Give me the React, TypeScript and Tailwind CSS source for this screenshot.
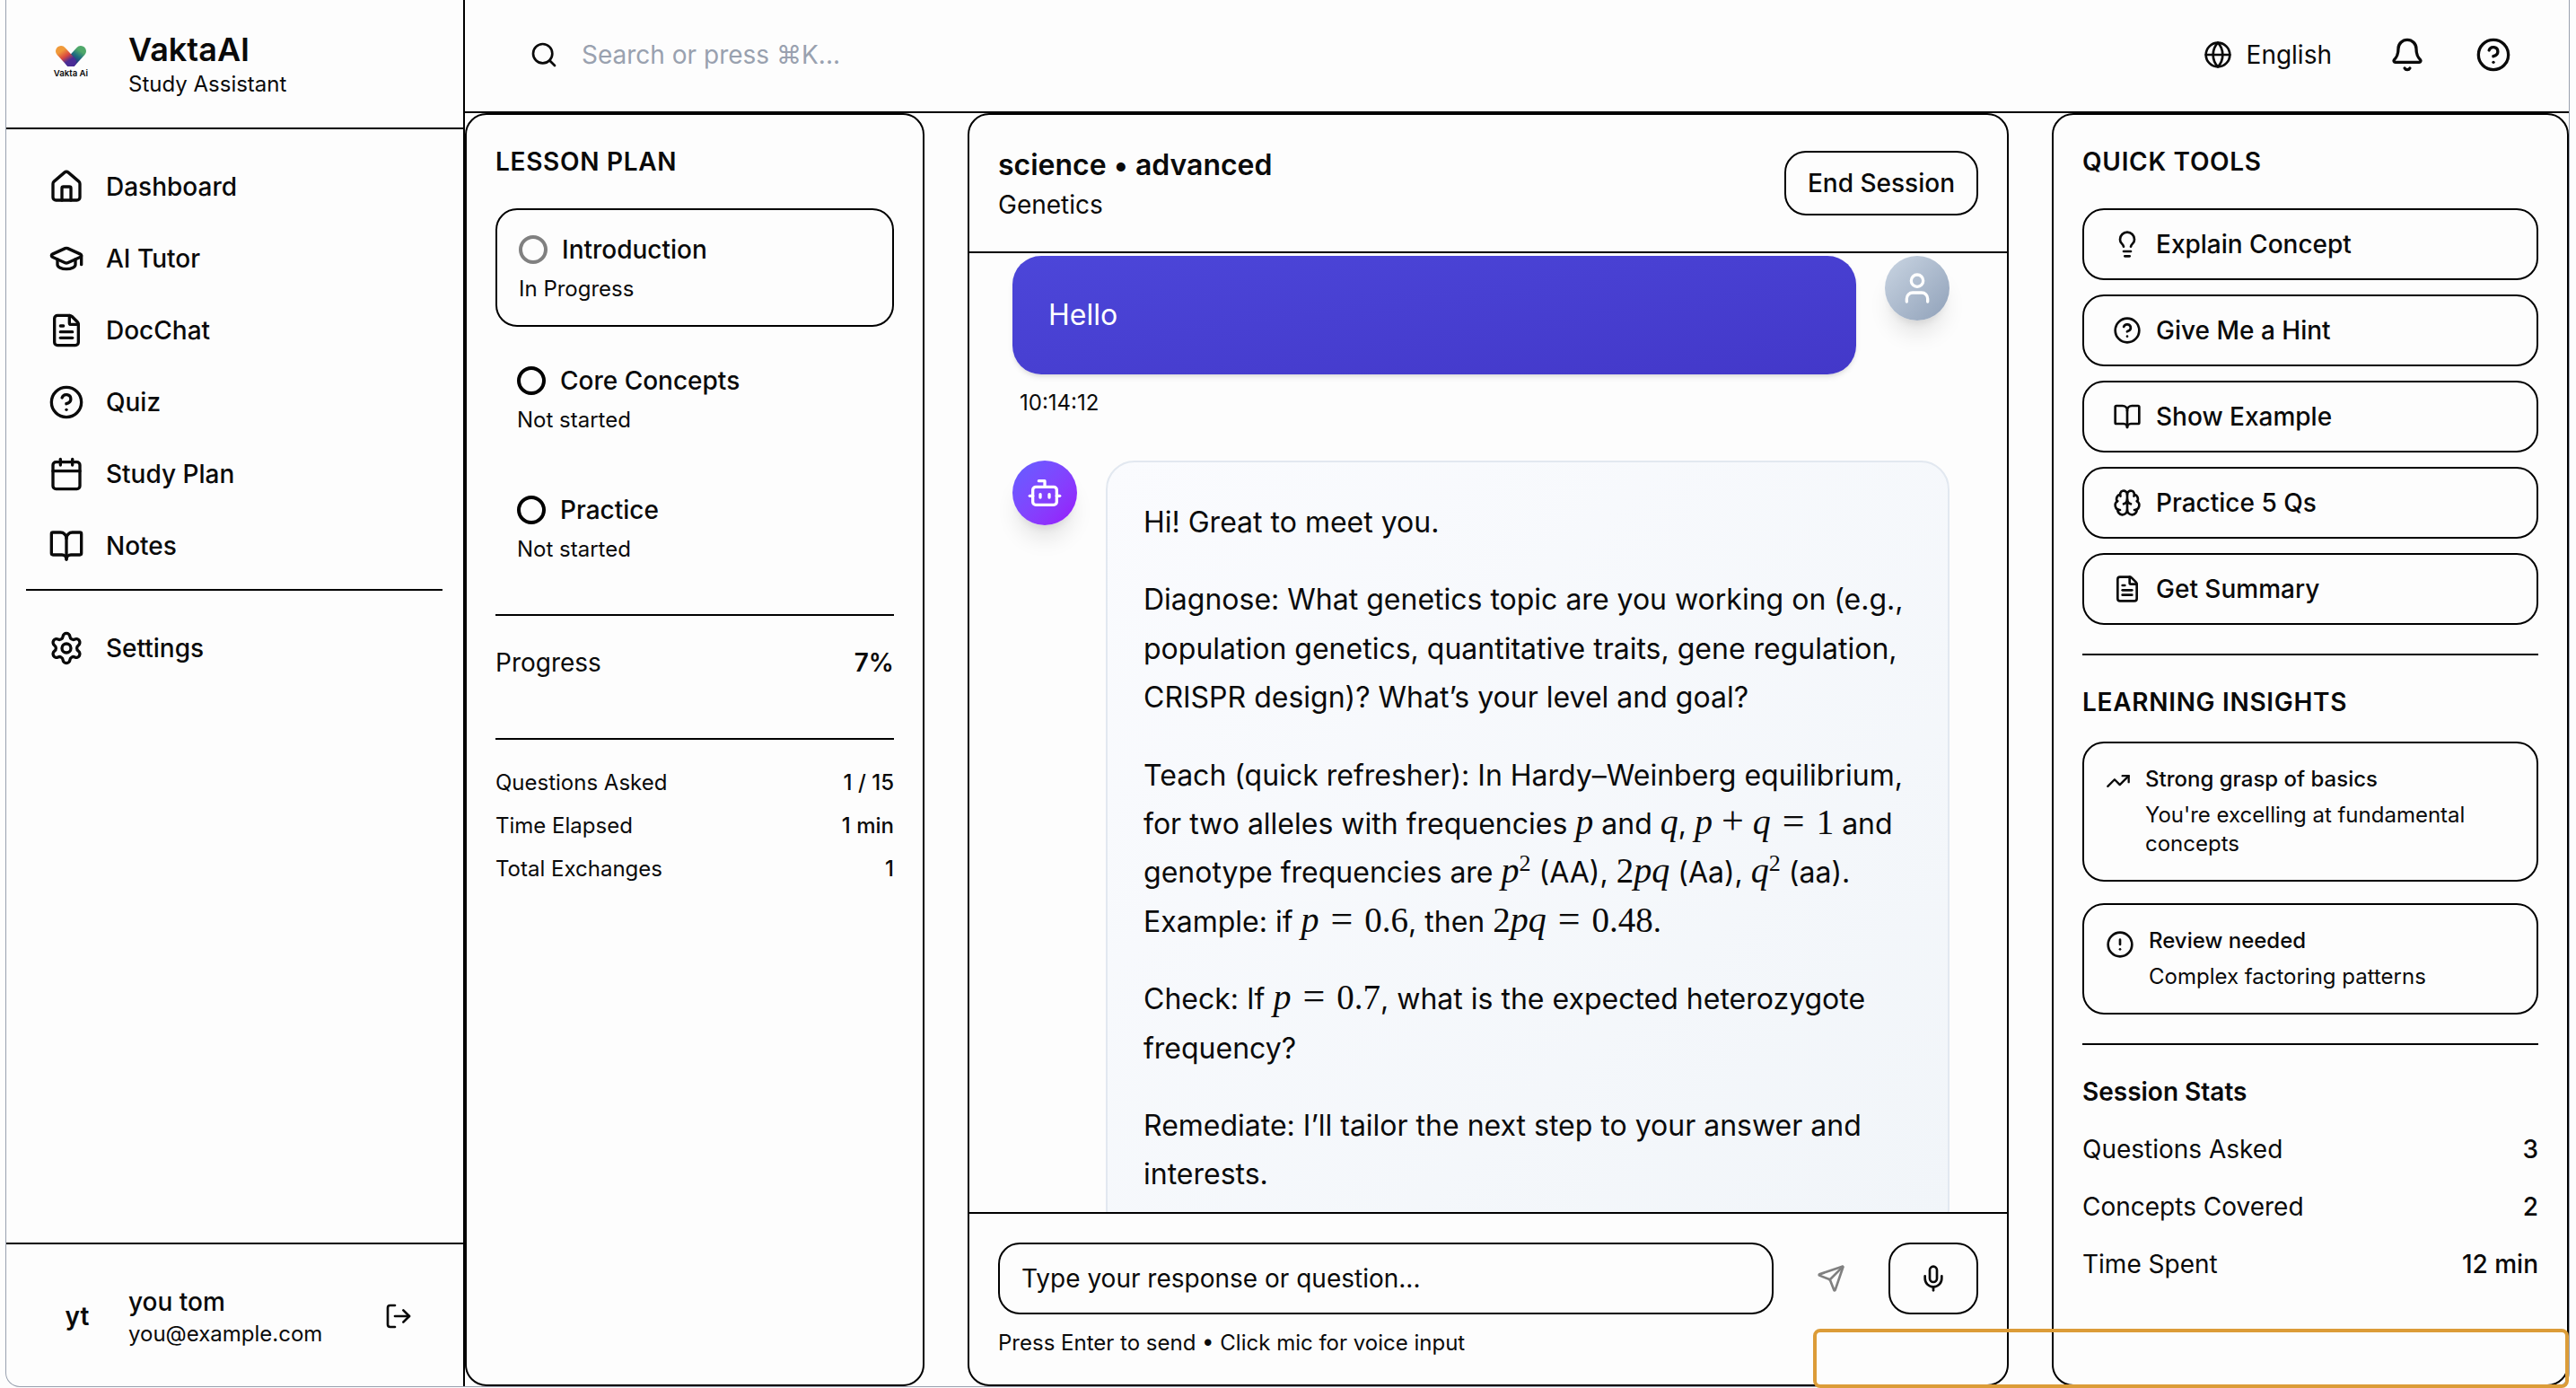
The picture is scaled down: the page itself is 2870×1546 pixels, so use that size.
import React from 'react';
import {
  BookOpen, Bell, Bot, Brain, Calendar, CircleAlert, CircleHelp, FileText, Globe, GraduationCap,
  House, Lightbulb, LogOut, Mic, Search, Send, Settings, TrendingUp, User,
} from 'lucide-react';

const NAV = [
  { label: 'Dashboard', icon: House },
  { label: 'AI Tutor', icon: GraduationCap },
  { label: 'DocChat', icon: FileText },
  { label: 'Quiz', icon: CircleHelp },
  { label: 'Study Plan', icon: Calendar },
  { label: 'Notes', icon: BookOpen },
];

const TOOLS = [
  { label: 'Explain Concept', icon: Lightbulb },
  { label: 'Give Me a Hint', icon: CircleHelp },
  { label: 'Show Example', icon: BookOpen },
  { label: 'Practice 5 Qs', icon: Brain },
  { label: 'Get Summary', icon: FileText },
];

const LESSON_STATS = [
  ['Questions Asked', '1 / 15'],
  ['Time Elapsed', '1 min'],
  ['Total Exchanges', '1'],
];

const SESSION_STATS = [
  ['Questions Asked', '3'],
  ['Concepts Covered', '2'],
  ['Time Spent', '12 min'],
];

// KaTeX look-alike, the math is still plain text
const V = ({ children }: { children: React.ReactNode }) => (
  <span className="font-['Liberation_Serif',serif] italic text-[40px] leading-none">{children}</span>
);
const N = ({ children }: { children: React.ReactNode }) => (
  <span className="font-['Liberation_Serif',serif] text-[39px] leading-none">{children}</span>
);
const Plus = () => (
  <span className="font-['Liberation_Serif',serif] text-[44px] leading-none mx-2.5">+</span>
);
const Eq = () => (
  <span className="font-['Liberation_Serif',serif] text-[44px] leading-none mx-[13px]">=</span>
);
const Sup = ({ children }: { children: React.ReactNode }) => (
  <sup className="font-['Liberation_Serif',serif] text-[26px] leading-none">{children}</sup>
);

const Logo = () => (
  <div className="w-20 h-20 flex flex-col items-center pt-[19px] shrink-0">
    <svg width="36" height="24" viewBox="0 0 36 24">
      <defs>
        <linearGradient id="logoLeft" x1="0" y1="0" x2="0.6" y2="1">
          <stop offset="0" stopColor="#f09a3a" />
          <stop offset="0.55" stopColor="#d9483f" />
          <stop offset="1" stopColor="#4a2c96" />
        </linearGradient>
        <linearGradient id="logoRight" x1="1" y1="0" x2="0.4" y2="1">
          <stop offset="0" stopColor="#4fa86a" />
          <stop offset="0.5" stopColor="#1f6c80" />
          <stop offset="1" stopColor="#27307f" />
        </linearGradient>
      </defs>
      <path d="M29 7 L18 19" stroke="url(#logoRight)" strokeWidth="12" strokeLinecap="round" fill="none" />
      <path d="M7 7 L18 19" stroke="url(#logoLeft)" strokeWidth="12" strokeLinecap="round" fill="none" />
    </svg>
    <span className="text-[9.6px] leading-3 font-semibold mt-0.5 whitespace-nowrap">Vakta Ai</span>
  </div>
);

const Sidebar = () => (
  <aside className="w-[511px] shrink-0 flex flex-col border-r-2 border-black">
    <div className="h-36 shrink-0 flex items-center gap-6 px-8 border-b-2 border-black">
      <Logo />
      <div>
        <div className="text-[36px] leading-[46px] font-semibold">VaktaAI</div>
        <div className="text-[24px] leading-8">Study Assistant</div>
      </div>
    </div>
    <nav className="flex-1 pt-6">
      {NAV.map(({ label, icon: Icon }) => (
        <div key={label} className="h-20 flex items-center gap-6 pl-[47px] text-[28px] font-medium">
          <Icon className="w-10 h-10" />
          {label}
        </div>
      ))}
      <div className="h-0.5 bg-black mt-2 mb-6 ml-[22px] mr-[23px]" />
      <div className="h-20 flex items-center gap-6 pl-[47px] text-[28px] font-medium">
        <Settings className="w-10 h-10" />
        Settings
      </div>
    </nav>
    <div className="h-40 shrink-0 flex items-center px-8 pt-0.5 border-t-2 border-black">
      <div className="w-20 pl-3.5 text-center text-[28px] font-semibold shrink-0">yt</div>
      <div className="ml-6 flex-1">
        <div className="text-[28px] leading-10 font-medium">you tom</div>
        <div className="text-[24px] leading-8">you@example.com</div>
      </div>
      <LogOut className="w-8 h-8 mr-6" />
    </div>
  </aside>
);

const TopBar = () => (
  <header className="h-[126px] shrink-0 flex items-center justify-between pl-[72px] pr-16 pb-0.5 border-b-2 border-black">
    <div className="flex items-center gap-[26px] text-[28px] text-gray-400">
      <Search className="w-8 h-8 text-[#0a0a0a]" />
      Search or press ⌘K...
    </div>
    <div className="flex items-center">
      <Globe className="w-8 h-8 mr-4" />
      <span className="text-[28px] mr-16">English</span>
      <Bell className="w-10 h-10 mr-14" />
      <CircleHelp className="w-10 h-10" />
    </div>
  </header>
);

const LessonStep = ({ title, status, active }: { title: string; status: string; active?: boolean }) => (
  <div className={active ? 'p-6 border-2 border-black rounded-3xl' : 'p-6'}>
    <div className="flex items-center gap-4 text-[28px] leading-10 font-medium">
      <span className={active ? 'w-8 h-8 rounded-full border-4 border-[#808080]' : 'w-8 h-8 rounded-full border-4 border-black'} />
      {title}
    </div>
    <div className="mt-2 text-[24px] leading-8">{status}</div>
  </div>
);

const LessonPanel = () => (
  <section className="w-128 shrink-0 border-2 border-black rounded-3xl p-8">
    <h3 className="text-[28px] leading-10 font-semibold tracking-wide mb-8">LESSON PLAN</h3>
    <div className="flex flex-col gap-4">
      <LessonStep title="Introduction" status="In Progress" active />
      <LessonStep title="Core Concepts" status="Not started" />
      <LessonStep title="Practice" status="Not started" />
    </div>
    <div className="h-0.5 bg-black my-8" />
    <div className="flex justify-between text-[28px] leading-10">
      <span>Progress</span>
      <span className="font-semibold">7%</span>
    </div>
    <div className="h-0.5 bg-black mt-16 mb-8" />
    <div className="flex flex-col gap-4 text-[24px] leading-8">
      {LESSON_STATS.map(([k, v]) => (
        <div key={k} className="flex justify-between">
          <span>{k}</span>
          <span className="font-medium">{v}</span>
        </div>
      ))}
    </div>
  </section>
);

const ChatPanel = () => (
  <section className="flex-1 min-w-0 flex flex-col border-2 border-black rounded-3xl overflow-hidden">
    <div className="shrink-0 flex items-center justify-between p-8 border-b-2 border-black">
      <div>
        <div className="text-[32px] leading-12 font-semibold">science • advanced</div>
        <div className="text-[28px] leading-10">Genetics</div>
      </div>
      <button className="h-18 px-6 border-2 border-black rounded-3xl text-[28px] font-medium">End Session</button>
    </div>

    <div className="flex-1 min-h-0 overflow-hidden pt-[3px] pl-12 pr-16">
      <div className="flex items-start gap-8">
        <div className="flex-1 rounded-[32px] p-10 text-[32px] leading-[52px] text-white bg-linear-to-br from-[#4c46d9] to-[#4338c9] shadow-md">
          Hello
        </div>
        <div className="w-18 h-18 shrink-0 rounded-full flex items-center justify-center text-white bg-linear-to-br from-slate-300 to-slate-400 shadow-xl">
          <User className="w-10 h-10" />
        </div>
      </div>
      <div className="mt-4 px-2 text-[24px] leading-8">10:14:12</div>

      <div className="mt-12 flex items-start gap-8">
        <div className="w-18 h-18 shrink-0 rounded-full flex items-center justify-center text-white bg-linear-to-br from-indigo-500 to-purple-600 shadow-xl">
          <Bot className="w-10 h-10" />
        </div>
        <div className="flex-1 min-w-0 rounded-[32px] border-2 border-slate-200 p-10 text-[32px] leading-[54.4px] bg-linear-to-br from-[#fafbfe] to-[#f1f5f9]">
          <p className="mb-8">Hi! Great to meet you.</p>
          <p className="mb-8">
            Diagnose: What genetics topic are you working on (e.g., population genetics, quantitative traits, gene regulation, CRISPR design)? What’s your level and goal?
          </p>
          <p className="mb-8">
            Teach (quick refresher): In Hardy–Weinberg equilibrium,<br />
            for two alleles with frequencies <V>p</V> and <V>q</V>, <V>p</V><Plus /><V>q</V><Eq /><N>1</N> and<br />
            genotype frequencies are <V>p</V><Sup>2</Sup> (AA), <N>2</N><V>pq</V> (Aa), <V>q</V><Sup>2</Sup> (aa).<br />
            Example: if <V>p</V><Eq /><N>0.6</N>, then <N>2</N><V>pq</V><Eq /><N>0.48</N>.
          </p>
          <p className="mb-8">
            Check: If <V>p</V><Eq /><N>0.7</N>, what is the expected heterozygote<br />
            frequency?
          </p>
          <p>Remediate: I’ll tailor the next step to your answer and interests.</p>
        </div>
      </div>
    </div>

    <div className="shrink-0 px-8 pt-8 pb-[30px] border-t-2 border-black">
      <div className="flex items-center gap-4">
        <div className="flex-1 h-20 flex items-center px-6 border-2 border-black rounded-3xl text-[28px]">
          Type your response or question...
        </div>
        <div className="h-20 px-8 flex items-center text-[#808080]">
          <Send className="w-8 h-8" />
        </div>
        <div className="h-20 px-8 flex items-center border-2 border-black rounded-3xl">
          <Mic className="w-8 h-8" />
        </div>
      </div>
      <div className="mt-4 text-[24px] leading-8">Press Enter to send • Click mic for voice input</div>
    </div>
  </section>
);

const Insight = ({ icon, title, text }: { icon: React.ReactNode; title: string; text: string }) => (
  <div className="flex items-start gap-4 p-6 border-2 border-black rounded-3xl">
    {icon}
    <div className="text-[24px] leading-8">
      <div className="font-medium">{title}</div>
      <div className="mt-2">{text}</div>
    </div>
  </div>
);

const ToolsPanel = () => (
  <section className="w-144 shrink-0 border-2 border-black rounded-3xl p-8">
    <h3 className="text-[28px] leading-10 font-semibold tracking-wide mb-8">QUICK TOOLS</h3>
    <div className="flex flex-col gap-4">
      {TOOLS.map(({ label, icon: Icon }) => (
        <button key={label} className="h-20 flex items-center gap-4 px-8 border-2 border-black rounded-3xl text-[28px] font-medium">
          <Icon className="w-8 h-8" />
          {label}
        </button>
      ))}
    </div>
    <div className="h-0.5 bg-black my-8" />
    <h3 className="text-[28px] leading-10 font-semibold tracking-wide mb-6">LEARNING INSIGHTS</h3>
    <div className="flex flex-col gap-6">
      <Insight
        icon={<TrendingUp className="w-7 h-7 mt-1 shrink-0" />}
        title="Strong grasp of basics"
        text="You're excelling at fundamental concepts"
      />
      <Insight
        icon={<CircleAlert className="w-8 h-8 mt-1 shrink-0" />}
        title="Review needed"
        text="Complex factoring patterns"
      />
    </div>
    <div className="h-0.5 bg-black my-8" />
    <h4 className="text-[28px] leading-10 font-semibold mb-6">Session Stats</h4>
    <div className="flex flex-col gap-6 text-[28px] leading-10">
      {SESSION_STATS.map(([k, v]) => (
        <div key={k} className="flex justify-between">
          <span>{k}</span>
          <span className="font-medium">{v}</span>
        </div>
      ))}
    </div>
  </section>
);

export default function App() {
  return (
    <div className="relative w-[2870px] h-[1546px] bg-[#fdfdfd] text-[#0a0a0a] font-['Inter',sans-serif] overflow-hidden">
      <div className="ml-1.5 w-[2857px] h-[1545px] flex border-x border-b border-gray-400 rounded-b-2xl overflow-hidden">
        <Sidebar />
        <main className="flex-1 min-w-0 flex flex-col">
          <TopBar />
          <div className="flex-1 min-h-0 flex gap-12">
            <LessonPanel />
            <ChatPanel />
            <ToolsPanel />
          </div>
        </main>
      </div>
      {/* empty orange outline lying over the bottom right corner */}
      <div className="absolute left-[2020px] top-[1480px] w-[842px] h-[66px] border-4 border-[#dc9c38] rounded-lg" />
    </div>
  );
}
